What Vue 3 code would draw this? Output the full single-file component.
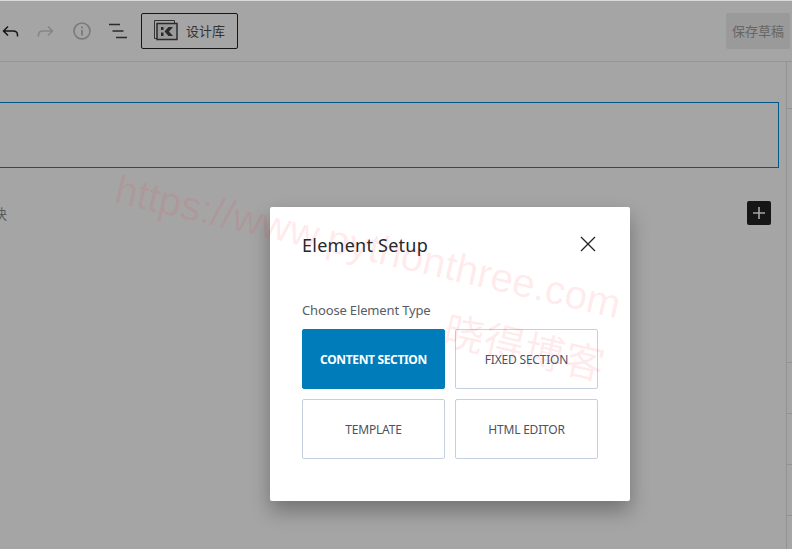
<template>
  <div class="page">
    <header class="toolbar">
      <button class="tool undo" aria-label="撤销">
        <svg width="20" height="20" viewBox="0 0 20 20"><path d="M8 5.500 3.500 10 8 14.500M3.500 10H13q4.500 0 4.500 4v1.500" fill="none" stroke="#161616" stroke-width="1.500" /></svg>
      </button>
      <button class="tool redo" aria-label="重做">
        <svg width="20" height="20" viewBox="0 0 20 20"><path d="m12 5.500 4.500 4.500-4.500 4.500M16.500 10H7q-4.500 0-4.500 4v1.500" fill="none" stroke="#858585" stroke-width="1.500" /></svg>
      </button>
      <button class="tool info" aria-label="详情">
        <svg width="20" height="20" viewBox="0 0 20 20"><circle cx="10" cy="10" r="8" fill="none" stroke="#7b7b7b" stroke-width="1.600" /><path d="M10 9v5.500M10 5.600v1.800" stroke="#7b7b7b" stroke-width="1.800" fill="none" /></svg>
      </button>
      <button class="tool outline" aria-label="大纲">
        <svg width="20" height="20" viewBox="0 0 20 20"><path d="M0 3.500h11M3.500 10h11M7 16.500h11" stroke="#2b2b2b" stroke-width="1.700" fill="none" /></svg>
      </button>
      <button class="library">
        <svg width="24" height="22" viewBox="0 0 24 22">
          <path d="M.5.500h20v2.500M.5.500v18h2.500" fill="none" stroke="#333" stroke-width="1" />
          <rect x="3" y="3.500" width="20" height="16" fill="#9a9a9a" stroke="#2b2b2b" stroke-width="1.500" />
          <path d="M7 7h2.500v3H7zM7 12.500h2.500V16H7zM10.500 11.500 14.500 7H19l-4 4.500 4 4.500h-4.500z" fill="#2a2a2a" />
        </svg>
        <span>设计库</span>
      </button>
      <button class="save">保存草稿</button>
    </header>

    <div class="workspace">
      <main class="canvas">
        <div class="title-block"></div>
        <div class="append-row">
          <span class="hint">块</span>
          <button class="add" aria-label="添加区块">
            <svg width="14" height="14" viewBox="0 0 14 14"><path d="M7 1v12M1 7h12" stroke="#a5a5a5" stroke-width="1.600" fill="none" /></svg>
          </button>
        </div>
      </main>
      <aside class="sidebar">
        <div v-for="h in panelHeights" :key="h.id" class="panel" :style="{ height: h.size + 'px' }"></div>
      </aside>
    </div>

    <div class="overlay">
      <section class="modal">
        <div class="modal-head">
          <h2>Element Setup</h2>
          <button class="close" aria-label="Close">
            <svg width="16" height="16" viewBox="0 0 16 16"><path d="m1 1 14 14M15 1 1 15" stroke="#222" stroke-width="1.300" fill="none" /></svg>
          </button>
        </div>
        <p class="label">Choose Element Type</p>
        <div class="types">
          <button
            v-for="t in types"
            :key="t"
            class="type"
            :class="{ active: t === selected }"
            @click="selected = t"
          >{{ t }}</button>
        </div>
      </section>
    </div>

    <div class="mark mark-url">https://www.pythonthree.com</div>
    <div class="mark mark-cn">晓得博客</div>
  </div>
</template>

<script setup>
import { ref } from 'vue';

const types = ['CONTENT SECTION', 'FIXED SECTION', 'TEMPLATE', 'HTML EDITOR'];
const selected = ref(types[0]);

const panelHeights = [
  { id: 1, size: 46 },
  { id: 2, size: 253 },
  { id: 3, size: 50 },
  { id: 4, size: 50 },
  { id: 5, size: 50 },
  { id: 6, size: 40 },
];
</script>

<style>
html, body {
  margin: 0;
  overflow: hidden;
}
</style>

<style scoped>
.page {
  position: relative;
  width: 792px;
  height: 549px;
  overflow: hidden;
  background: #a5a5a5;
  font-family: "Noto Sans", "Noto Sans CJK SC", sans-serif;
  border-top: 1px solid #d9d9d9;
  box-sizing: border-box;
}

button {
  font-family: inherit;
  padding: 0;
  border: none;
  background: none;
}

.toolbar {
  display: flex;
  align-items: center;
  height: 60px;
  border-bottom: 1px solid #959595;
  box-sizing: content-box;
}

.tool {
  display: flex;
  width: 20px;
  height: 20px;
}

.undo { margin-left: 0; }
.redo { margin-left: 16px; }
.info { margin-left: 16px; }
.outline { margin-left: 17px; }

.library {
  display: flex;
  align-items: center;
  gap: 8px;
  width: 97px;
  height: 36px;
  margin-left: 12px;
  padding-left: 12px;
  padding-bottom: 1px;
  box-sizing: border-box;
  border: 1px solid #161616;
  border-radius: 2px;
  color: #333;
  font-size: 13px;
}

.save {
  width: 64px;
  height: 36px;
  margin-left: auto;
  margin-right: 2px;
  padding-bottom: 2px;
  border-radius: 2px;
  background: #9a9a9a;
  color: #666;
  font-size: 13px;
}

.workspace {
  display: flex;
  height: 487px;
}

.canvas {
  flex: 1;
  padding-top: 40px;
}

.title-block {
  width: 784px;
  height: 64px;
  margin-left: -7px;
  border: 1px solid #005a87;
}

.append-row {
  display: flex;
  align-items: center;
  justify-content: space-between;
  width: 778px;
  height: 24px;
  margin-top: 33px;
  margin-left: -7px;
}

.hint {
  font-size: 14px;
  color: #5c5c5c;
}

.add {
  display: flex;
  align-items: center;
  justify-content: center;
  width: 24px;
  height: 24px;
  border-radius: 2px;
  background: #161616;
}

.sidebar {
  width: 5px;
  border-left: 1px solid #929292;
}

.panel {
  border-bottom: 1px solid #929292;
}

.overlay {
  position: absolute;
  inset: 0;
  padding: 206px 0 0 270px;
}

.modal {
  width: 360px;
  height: 294px;
  padding: 23px 32px 0;
  box-sizing: border-box;
  background: #fff;
  border-radius: 2px;
  box-shadow: 0 10px 20px rgba(0, 0, 0, 0.3);
}

.modal-head {
  display: flex;
  align-items: center;
  justify-content: space-between;
  height: 30px;
}

.modal-head h2 {
  margin: 0;
  font-size: 18px;
  font-weight: 400;
  letter-spacing: 0.25px;
  color: #23282d;
}

.close {
  display: flex;
  margin-right: 2px;
  margin-top: -2px;
}

.label {
  margin: 40px 0 0;
  font-size: 13px;
  line-height: 20px;
  letter-spacing: -0.15px;
  color: #555d66;
}

.types {
  display: grid;
  grid-template-columns: 143px 143px;
  grid-auto-rows: 60px;
  gap: 10px;
  margin-top: 9px;
}

.type {
  border: 1px solid #c5d0de;
  border-radius: 2px;
  background: #fff;
  color: #4a5263;
  font-size: 12px;
  font-weight: 400;
  letter-spacing: -0.2px;
}

.type.active {
  border-color: #007cba;
  background: #007cba;
  color: #fff;
  font-weight: 700;
  letter-spacing: -0.35px;
}

.mark {
  position: absolute;
  white-space: nowrap;
  color: rgba(255, 40, 60, 0.1);
  pointer-events: none;
  transform-origin: 0 0;
  transform: rotate(13deg);
}

.mark-url {
  left: 121px;
  top: 166px;
  font-family: "Liberation Sans", sans-serif;
  font-size: 40.3px;
}

.mark-cn {
  left: 452px;
  top: 298px;
  font-family: "Noto Sans CJK SC", sans-serif;
  font-size: 40px;
  font-weight: 400;
  letter-spacing: 1px;
}
</style>
